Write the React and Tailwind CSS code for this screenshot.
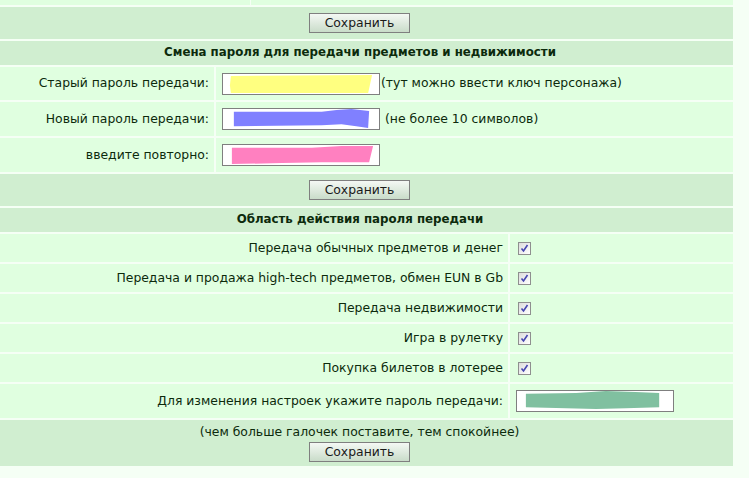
import React from 'react';

const rowLight = 'bg-[#e0ffe0]';
const rowDark = 'bg-[#d0eed0]';

function SaveButton() {
  return (
    <button
      type="button"
      className="w-[101px] h-[20px] border border-[#7f7f7f] bg-gradient-to-b from-[#f4f8f4] to-[#c9dcc9] text-[12.4px] leading-none text-[#1a1a1a]"
    >
      Сохранить
    </button>
  );
}

function Scribble({ color, points }) {
  return (
    <svg className="absolute inset-0 w-full h-full" viewBox="0 0 158 21" preserveAspectRatio="none">
      <polygon points={points} fill={color} />
    </svg>
  );
}

function FakeInput({ color, points }) {
  return (
    <div className="relative w-[158px] h-[22px] border border-[#7f7f7f] bg-white shrink-0">
      <Scribble color={color} points={points} />
    </div>
  );
}

function Check() {
  return (
    <span className="w-[13px] h-[13px] border border-[#8f8f8f] bg-gradient-to-br from-[#dcdcdc] to-[#ffffff] flex items-center justify-center">
      <svg width="9" height="9" viewBox="0 0 9 9">
        <path d="M1.5 4.5 L3.5 7 L7.5 1" fill="none" stroke="#4646b0" strokeWidth="1.6" />
      </svg>
    </span>
  );
}

export default function App() {
  const formRows = [
    {
      label: 'Старый пароль передачи:',
      color: '#ffff80',
      points: '8,2 151,1 147,20 8,20 7,12',
      note: '(тут можно ввести ключ персонажа)',
      noteClass: 'ml-[1px]',
    },
    {
      label: 'Новый пароль передачи:',
      color: '#8080ff',
      points: '11,3 100,3 115,1 130,0 148,2 147,20 135,18 120,16 100,17 11,18',
      note: '(не более 10 символов)',
      noteClass: 'ml-[5px]',
    },
    {
      label: 'введите повторно:',
      color: '#ff80c0',
      points: '9,3 90,3 120,1 152,1 148,18 100,18 60,19 9,20',
      note: '',
      noteClass: '',
    },
  ];

  const scopes = [
    'Передача обычных предметов и денег',
    'Передача и продажа high-tech предметов, обмен EUN в Gb',
    'Передача недвижимости',
    'Игра в рулетку',
    'Покупка билетов в лотерее',
  ];

  return (
    <div className="w-[749px] h-[478px] overflow-hidden bg-[#f5fff5] font-['DejaVu_Sans',sans-serif] text-[12.4px] text-[#0c2a0c]">
      <div className="w-[733px] flex flex-col gap-[2px]">
        {/* tail of the previous table */}
        <div className="flex gap-[1px] h-[5px]">
          <div className={`w-[250px] ${rowLight}`} />
          <div className={`flex-1 ${rowLight}`} />
        </div>

        <div className={`h-[32px] ${rowDark} flex items-center justify-center pr-[14px]`}>
          <SaveButton />
        </div>

        <div className={`h-[24px] ${rowDark} flex items-center justify-center pr-[13px] font-bold text-[11.8px]`}>
          Смена пароля для передачи предметов и недвижимости
        </div>

        {formRows.map((row, idx) => (
          <div key={idx} className={`flex gap-[2px] ${idx === 0 ? 'h-[33px]' : 'h-[34px]'}`}>
            <div className={`w-[214px] ${rowLight} flex items-center justify-end pr-[5px]`}>{row.label}</div>
            <div className={`flex-1 ${rowLight} flex items-center pl-[6px]`}>
              <FakeInput color={row.color} points={row.points} />
              {row.note && <span className={row.noteClass}>{row.note}</span>}
            </div>
          </div>
        ))}

        <div className={`h-[32px] ${rowDark} flex items-center justify-center pr-[14px]`}>
          <SaveButton />
        </div>

        <div className={`h-[24px] ${rowDark} flex items-center justify-center pr-[13px] font-bold text-[11.8px]`}>
          Область действия пароля передачи
        </div>

        {scopes.map((s, idx) => (
          <div key={idx} className="flex gap-[2px] h-[28px]">
            <div className={`w-[508px] ${rowLight} flex items-center justify-end pr-[5px]`}>{s}</div>
            <div className={`flex-1 ${rowLight} flex items-center pl-[8px]`}>
              <Check />
            </div>
          </div>
        ))}

        <div className="flex gap-[2px] h-[34px]">
          <div className={`w-[508px] ${rowLight} flex items-center justify-end pr-[5px]`}>
            Для изменения настроек укажите пароль передачи:
          </div>
          <div className={`flex-1 ${rowLight} flex items-center pl-[6px]`}>
            <FakeInput color="#80c0a0" points="9,3 60,2 90,0 120,1 144,2 144,17 110,18 80,19 9,17" />
          </div>
        </div>

        <div className={`h-[46px] ${rowDark} flex flex-col items-center pt-[4px] gap-[3px] pr-[14px]`}>
          <span className="leading-[15px]">(чем больше галочек поставите, тем спокойнее)</span>
          <SaveButton />
        </div>
      </div>
    </div>
  );
}
